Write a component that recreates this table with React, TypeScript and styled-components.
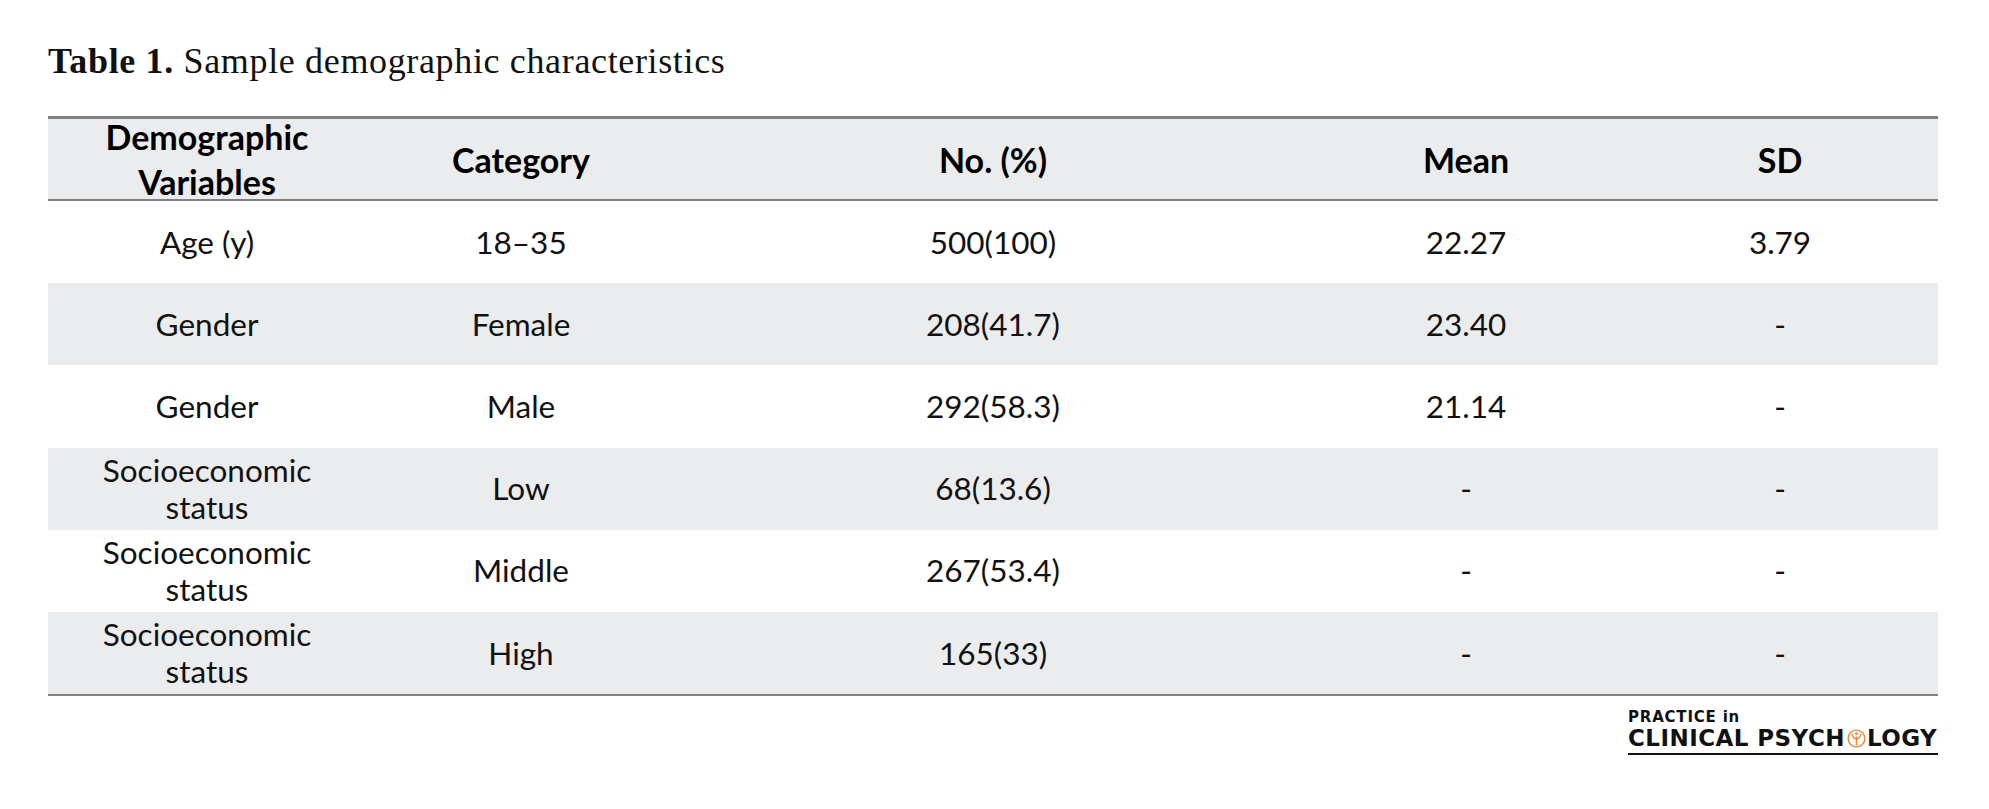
import styled, { createGlobalStyle } from 'styled-components';

const GlobalStyle = createGlobalStyle`
    html, body {
        margin: 0;
        padding: 0;
        background: #ffffff;
    }
`;

const PageWrapper = styled.div`
    width: 1989px;
    height: 809px;
    box-sizing: border-box;
    padding: 41px 51px 0 48px;
    display: flex;
    flex-direction: column;
`;

const Caption = styled.p`
    margin: 0;
    font-family: "Liberation Serif", "Times New Roman", serif;
    font-size: 36px;
    line-height: 40px;
    letter-spacing: 0.65px;
    color: #111111;
`;

const CaptionLabel = styled.b`
    font-weight: 700;
`;

const TableGrid = styled.div`
    margin-top: 35px;
    display: grid;
    grid-template-columns: 318px 310px 634px 312px 1fr;
    border-top: 3px solid #808080;
    border-bottom: 2px solid #808080;
`;

const HeadCell = styled.div`
    height: 80px;
    background: #ebecee;
    border-bottom: 2px solid #808080;
    display: flex;
    align-items: center;
    justify-content: center;
    text-align: center;
    font-family: Lato, "Open Sans", sans-serif;
    font-weight: 700;
    font-size: 34px;
    line-height: 45px;
    color: #000000;
`;

const BodyCell = styled.div<{ $shaded: boolean }>`
    height: 82.2px;
    background: ${(p) => (p.$shaded ? '#ebecee' : '#ffffff')};
    display: flex;
    align-items: center;
    justify-content: center;
    text-align: center;
    font-family: Lato, "Open Sans", sans-serif;
    font-size: 31.5px;
    line-height: 37px;
    color: #111111;
`;

const LogoBox = styled.div`
    align-self: flex-end;
    margin-top: 12px;
    width: 310px;
    display: flex;
    flex-direction: column;
    font-family: "DejaVu Sans", Verdana, sans-serif;
    font-weight: 700;
    color: #111111;
`;

const LogoSmall = styled.span`
    font-size: 15px;
    line-height: 18px;
    letter-spacing: 0.8px;
`;

const LogoLarge = styled.span`
    display: flex;
    align-items: center;
    white-space: pre;
    font-size: 23px;
    line-height: 24px;
    letter-spacing: 0.45px;
    padding-bottom: 3px;
    border-bottom: 2px solid #111111;
`;

const header = ['Demographic\nVariables', 'Category', 'No. (%)', 'Mean', 'SD'];

const rows = [
    ['Age (y)', '18–35', '500(100)', '22.27', '3.79'],
    ['Gender', 'Female', '208(41.7)', '23.40', '-'],
    ['Gender', 'Male', '292(58.3)', '21.14', '-'],
    ['Socioeconomic\nstatus', 'Low', '68(13.6)', '-', '-'],
    ['Socioeconomic\nstatus', 'Middle', '267(53.4)', '-', '-'],
    ['Socioeconomic\nstatus', 'High', '165(33)', '-', '-'],
];

function lines(text: string) {
    const parts = text.split('\n');
    return parts.map((t, i) => (
        <span key={i}>
            {t}
            {i < parts.length - 1 && <br />}
        </span>
    ));
}

function PsychMark() {
    return (
        <svg width="19" height="19" viewBox="0 0 20 20" style={{ margin: '0 1px 0 2px' }}>
            <circle cx="10" cy="10" r="8.8" fill="none" stroke="#e8893a" strokeWidth="1.5" />
            <circle cx="10" cy="5" r="1.5" fill="#e8893a" />
            <path d="M5.3 5.2 Q6 10 10 10.6 Q14 10 14.7 5.2" fill="none" stroke="#e8893a" strokeWidth="1.5" />
            <path d="M10 8 V17.5" stroke="#e8893a" strokeWidth="1.6" />
        </svg>
    );
}

function App() {
    return (
        <PageWrapper>
            <GlobalStyle />
            <Caption>
                <CaptionLabel>Table 1.</CaptionLabel> Sample demographic characteristics
            </Caption>
            <TableGrid>
                {header.map((h) => (
                    <HeadCell key={h}>
                        <div>{lines(h)}</div>
                    </HeadCell>
                ))}
                {rows.map((row, r) =>
                    row.map((cell, c) => (
                        <BodyCell key={`${r}-${c}`} $shaded={r % 2 === 1}>
                            <div>{lines(cell)}</div>
                        </BodyCell>
                    ))
                )}
            </TableGrid>
            <LogoBox>
                <LogoSmall>PRACTICE in</LogoSmall>
                <LogoLarge>
                    CLINICAL PSYCH
                    <PsychMark />
                    LOGY
                </LogoLarge>
            </LogoBox>
        </PageWrapper>
    );
}

export default App;
